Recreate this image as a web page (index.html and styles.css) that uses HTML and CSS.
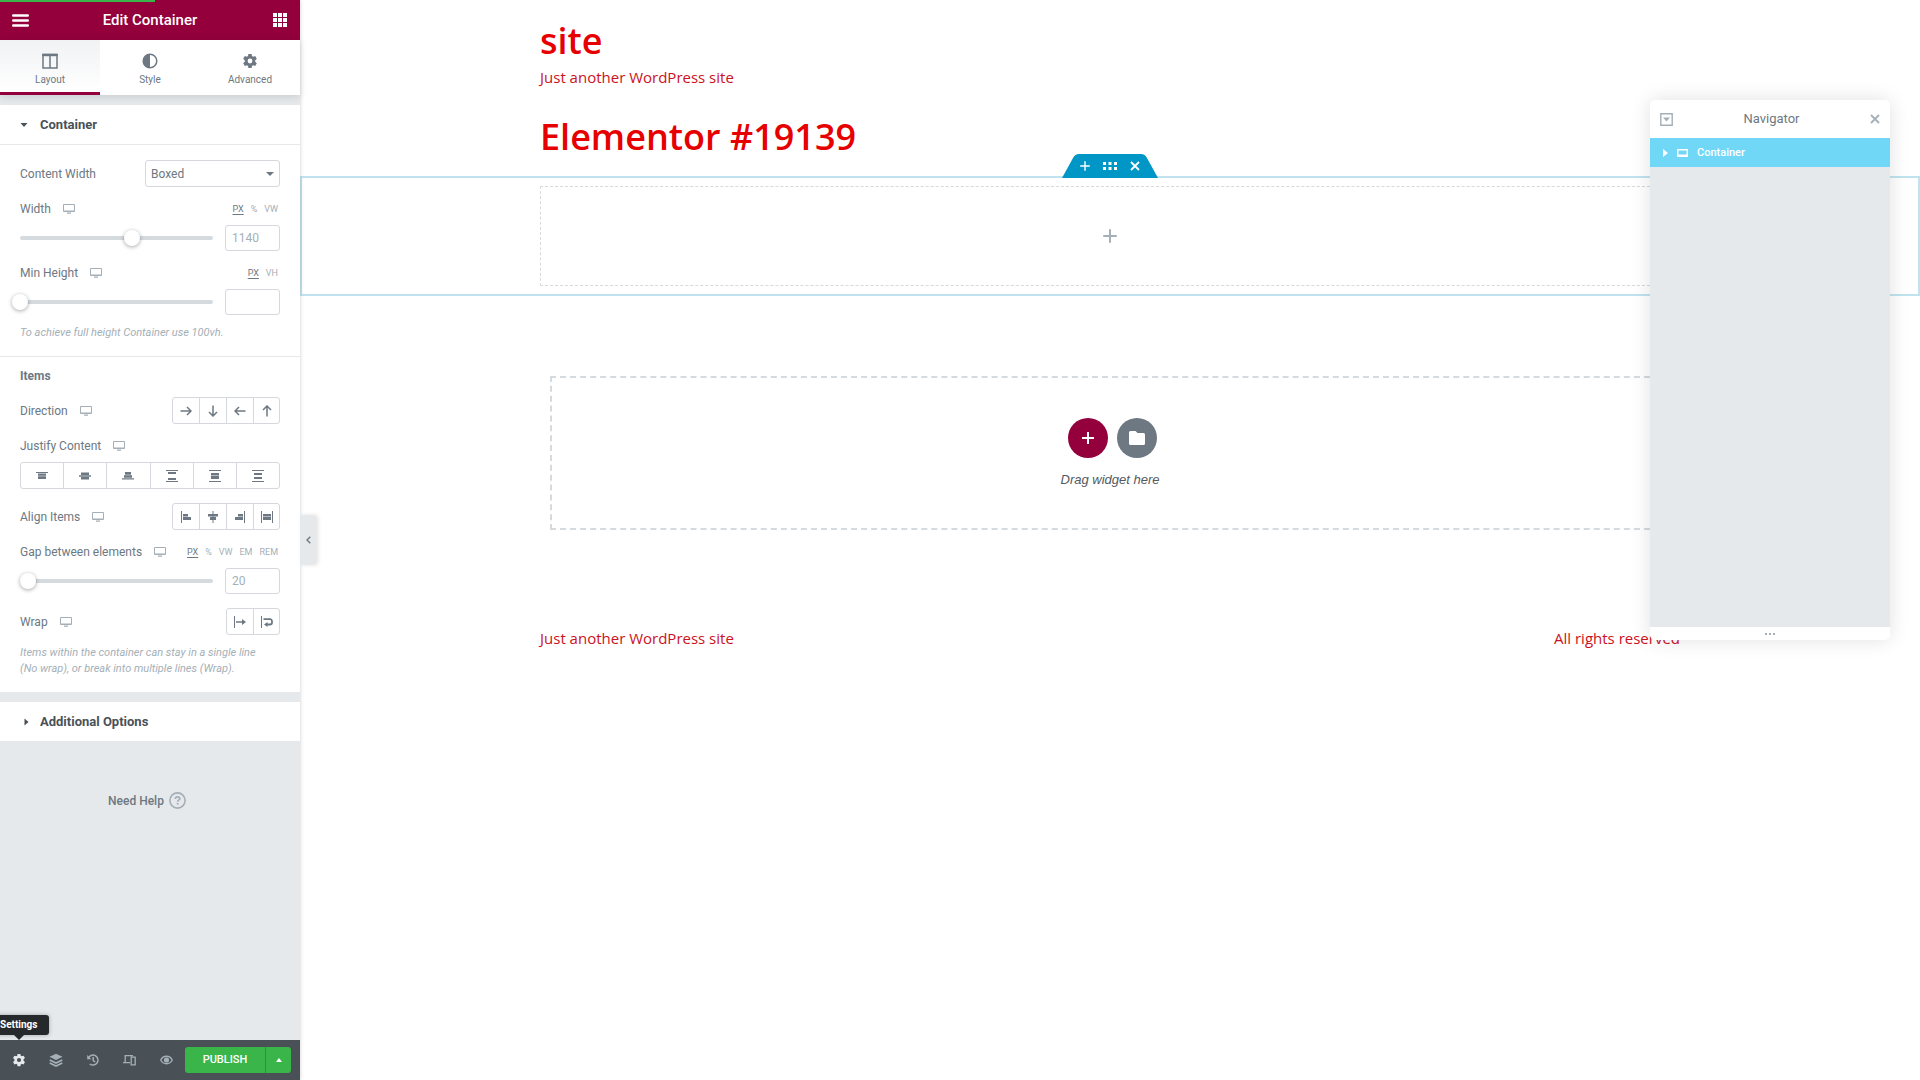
FILE: index.html
```html
<!DOCTYPE html>
<html lang="en">
<head>
<meta charset="utf-8">
<title>Elementor #19139</title>
<meta name="viewport" content="width=device-width, initial-scale=1">
<link rel="stylesheet" href="styles.css">
</head>
<body>
<svg class="sprite" aria-hidden="true">
  <symbol id="desktop" viewBox="0 0 12 10"><path fill="none" stroke="currentColor" d="M.5.5h11v7H.5z"/><path fill="currentColor" d="M1 6.5h10v1H1zM4 8.5h4v1.2H4z"/></symbol>
  <symbol id="gear" viewBox="0 0 16 16"><path fill="currentColor" fill-rule="evenodd" d="M6.4 1h3.2l.4 2 1.2.7 2-.7 1.6 2.8-1.6 1.4v1.6l1.6 1.4-1.6 2.8-2-.7-1.2.7-.4 2H6.4l-.4-2-1.2-.7-2 .7-1.6-2.8 1.6-1.4V7.200L1.200 5.800 2.800 3l2 .7L6 3zM8 5.600a2.400 2.400 0 1 0 0 4.800 2.400 2.400 0 0 0 0-4.800z"/></symbol>
  <symbol id="arrow" viewBox="0 0 12 12"><path fill="none" stroke="currentColor" stroke-width="1.500" d="M.5 6h10.500M7 2l4 4-4 4"/></symbol>
  <symbol id="plus" viewBox="0 0 14 14"><path fill="none" stroke="currentColor" stroke-width="2" stroke-linecap="round" d="M7 1v12M1 7h12"/></symbol>
  <symbol id="cross" viewBox="0 0 10 10"><path fill="none" stroke="currentColor" stroke-width="1.800" d="M1 1l8 8M9 1L1 9"/></symbol>
</svg>

<div class="editor">
  <aside class="panel">
    <div class="progress"></div>
    <header class="panel-header">
      <button type="button" aria-label="Menu"><svg width="17" height="13" viewBox="0 0 17 13"><path stroke="currentColor" stroke-width="2.400" stroke-linecap="round" d="M1.200 1.500h14.600M1.200 6.500h14.600M1.200 11.500h14.600"/></svg></button>
      <h2>Edit Container</h2>
      <button type="button" aria-label="Widgets"><svg width="14" height="14" viewBox="0 0 14 14"><path fill="currentColor" d="M0 0h4v4H0zM5 0h4v4H5zM10 0h4v4h-4zM0 5h4v4H0zM5 5h4v4H5zM10 5h4v4h-4zM0 10h4v4H0zM5 10h4v4H5zM10 10h4v4h-4z"/></svg></button>
    </header>
    <nav class="tabs">
      <button type="button" class="active"><svg width="16" height="16" viewBox="0 0 16 16"><path fill="none" stroke="currentColor" stroke-width="1.500" d="M1 1.500h14v13.500H1zM8 1.500V15"/><path fill="currentColor" d="M.3.8h15.400v2.400H.3z"/></svg>Layout</button>
      <button type="button"><svg width="16" height="16" viewBox="0 0 16 16"><circle cx="8" cy="8" r="6.800" fill="none" stroke="currentColor" stroke-width="1.500"/><path fill="currentColor" d="M8 1a7 7 0 0 0 0 14z"/></svg>Style</button>
      <button type="button"><svg width="16" height="16"><use href="#gear"/></svg>Advanced</button>
    </nav>

    <div class="sections">
      <section class="section">
        <button type="button" class="section-title"><svg width="8" height="8" viewBox="0 0 8 8"><path fill="currentColor" d="M.5 2h7L4 6z"/></svg>Container</button>
        <div class="controls">
          <div class="row tall">
            <label for="content-width">Content Width</label>
            <span class="select"><select id="content-width"><option>Boxed</option></select><svg width="8" height="4" viewBox="0 0 8 4"><path fill="currentColor" d="M0 0h8L4 4z"/></svg></span>
          </div>
          <div class="control">
            <div class="row"><label for="width">Width</label><svg class="device" width="12" height="10"><use href="#desktop"/></svg><span class="units"><u>PX</u><span>%</span><span>VW</span></span></div>
            <div class="slide"><span class="range"><input type="range" min="500" max="1600" value="1140" aria-label="Width"></span><input class="num" id="width" type="text" placeholder="1140"></div>
          </div>
          <div class="control">
            <div class="row"><label for="min-height">Min Height</label><svg class="device" width="12" height="10"><use href="#desktop"/></svg><span class="units"><u>PX</u><span>VH</span></span></div>
            <div class="slide"><span class="range"><input type="range" min="0" max="1440" value="0" aria-label="Min Height"></span><input class="num" id="min-height" type="text"></div>
            <p class="hint">To achieve full height Container use 100vh.</p>
          </div>
        </div>
        <div class="controls items">
          <h3>Items</h3>
          <div class="row tall">
            <span>Direction</span><svg class="device" width="12" height="10"><use href="#desktop"/></svg>
            <div class="choices">
              <button type="button" aria-label="Row"><svg width="12" height="12"><use href="#arrow"/></svg></button>
              <button type="button" aria-label="Column"><svg class="down" width="12" height="12"><use href="#arrow"/></svg></button>
              <button type="button" aria-label="Row reversed"><svg class="left" width="12" height="12"><use href="#arrow"/></svg></button>
              <button type="button" aria-label="Column reversed"><svg class="up" width="12" height="12"><use href="#arrow"/></svg></button>
            </div>
          </div>
          <div class="control">
            <div class="row"><span>Justify Content</span><svg class="device" width="12" height="10"><use href="#desktop"/></svg></div>
            <div class="choices wide">
              <button type="button" aria-label="Start"><svg width="12" height="12" viewBox="0 0 12 12"><path fill="currentColor" d="M0 2h12v1H0zM2 3.500h8v2.300H2zM2 6.300h8v2.700H2z"/></svg></button>
              <button type="button" aria-label="Center"><svg width="12" height="12" viewBox="0 0 12 12"><path fill="currentColor" d="M2 2.500h8v2.500H2zM0 5.300h12v1.400H0zM2 7h8v2.500H2z"/></svg></button>
              <button type="button" aria-label="End"><svg width="12" height="12" viewBox="0 0 12 12"><path fill="currentColor" d="M3 2h6v2.700H3zM2 5.200h8v2.500H2zM0 8.200h12v1.300H0z"/></svg></button>
              <button type="button" aria-label="Space between"><svg width="12" height="12" viewBox="0 0 12 12"><path fill="currentColor" d="M0 0h12v1H0zM2 2h8v2H2zM2 8h8v2H2zM0 11h12v1H0z"/></svg></button>
              <button type="button" aria-label="Space around"><svg width="12" height="12" viewBox="0 0 12 12"><path fill="currentColor" d="M0 0h12v1H0zM2 3h8v2.500H2zM2 6h8v3H2zM0 11h12v1H0z"/></svg></button>
              <button type="button" aria-label="Space evenly"><svg width="12" height="12" viewBox="0 0 12 12"><path fill="currentColor" d="M0 0h12v1H0zM2 3h8v2H2zM2 7h8v2H2zM0 11h12v1H0z"/></svg></button>
            </div>
          </div>
          <div class="row tall">
            <span>Align Items</span><svg class="device" width="12" height="10"><use href="#desktop"/></svg>
            <div class="choices">
              <button type="button" aria-label="Start"><svg width="12" height="12" viewBox="0 0 12 12"><path fill="currentColor" d="M1 0h1v12H1zM3 3h5v2.500H3zM3 6h8v3H3z"/></svg></button>
              <button type="button" aria-label="Center"><svg width="12" height="12" viewBox="0 0 12 12"><path fill="currentColor" d="M5.500 0h1v12h-1zM1 3h10v2.500H1zM3 6h6v3H3z"/></svg></button>
              <button type="button" aria-label="End"><svg width="12" height="12" viewBox="0 0 12 12"><path fill="currentColor" d="M10 0h1v12h-1zM4 3h5v2.500H4zM1 6h8v3H1z"/></svg></button>
              <button type="button" aria-label="Stretch"><svg width="12" height="12" viewBox="0 0 12 12"><path fill="currentColor" d="M0 0h1v12H0zM11 0h1v12h-1zM2 3h8v2.500H2zM2 6h8v3H2z"/></svg></button>
            </div>
          </div>
          <div class="control">
            <div class="row"><label for="gap">Gap between elements</label><svg class="device" width="12" height="10"><use href="#desktop"/></svg><span class="units"><u>PX</u><span>%</span><span>VW</span><span>EM</span><span>REM</span></span></div>
            <div class="slide"><span class="range"><input type="range" min="0" max="500" value="20" aria-label="Gap between elements"></span><input class="num" id="gap" type="text" placeholder="20"></div>
          </div>
          <div class="control">
            <div class="row tall">
              <span>Wrap</span><svg class="device" width="12" height="10"><use href="#desktop"/></svg>
              <div class="choices">
                <button type="button" aria-label="No wrap"><svg width="12" height="12" viewBox="0 0 12 12"><path fill="currentColor" d="M0 0h1v12H0zM2 5.200h6V3l4 3-4 3V6.800H2z"/></svg></button>
                <button type="button" aria-label="Wrap"><svg width="12" height="12" viewBox="0 0 12 12"><path fill="currentColor" d="M0 0h1v12H0zM3 8.500L6.500 6v5z"/><path fill="none" stroke="currentColor" stroke-width="1.800" d="M2.500 3.200H9a2 2 0 0 1 2 2v1.300a2 2 0 0 1-2 2H6"/></svg></button>
              </div>
            </div>
            <p class="hint">Items within the container can stay in a single line (No wrap), or break into multiple lines (Wrap).</p>
          </div>
        </div>
      </section>
      <section class="section">
        <button type="button" class="section-title closed"><svg width="8" height="8" viewBox="0 0 8 8"><path fill="currentColor" d="M2.500.5v7L6.500 4z"/></svg>Additional Options</button>
      </section>
      <a class="help" href="#help">Need Help <svg width="17" height="17" viewBox="0 0 17 17"><circle cx="8.500" cy="8.500" r="7.600" fill="none" stroke="currentColor" stroke-width="1.600"/><path fill="none" stroke="currentColor" stroke-width="1.600" d="M6.300 7c0-3 4.500-2.700 4.500-.3 0 1.500-2.200 1.500-2.200 3"/><circle cx="8.600" cy="11.800" r="1" fill="currentColor"/></svg></a>
    </div>

    <footer class="panel-footer">
      <button type="button" class="tool on" aria-label="Settings"><svg width="14" height="14"><use href="#gear"/></svg></button>
      <button type="button" class="tool" aria-label="Navigator"><svg width="14" height="14" viewBox="0 0 14 14"><path fill="currentColor" d="M7 .8l6.500 3L7 7 .5 3.800z"/><path fill="none" stroke="currentColor" stroke-width="1.600" d="M.7 7L7 10l6.300-3M.7 10L7 13l6.300-3"/></svg></button>
      <button type="button" class="tool" aria-label="History"><svg width="12" height="12" viewBox="0 0 12 12"><path fill="none" stroke="currentColor" stroke-width="1.500" d="M1.600 3.600A5 5 0 1 1 2.800 10M6.200 3v3.500l2 1.500"/><path fill="currentColor" d="M.2 1v4.200h4.200z"/></svg></button>
      <button type="button" class="tool" aria-label="Responsive mode"><svg width="13" height="12" viewBox="0 0 13 12"><path fill="none" stroke="currentColor" stroke-width="1.300" d="M2.200 8V1.700H10M0 8.700h7M8.200 3.200h4v7.600h-4z"/></svg></button>
      <button type="button" class="tool" aria-label="Preview"><svg width="13" height="10" viewBox="0 0 13 10"><path fill="none" stroke="currentColor" stroke-width="1.300" d="M.7 5c2.500-5 9.100-5 11.600 0-2.500 5-9.100 5-11.600 0z"/><circle cx="6.500" cy="5" r="2.600" fill="currentColor"/></svg></button>
      <button type="button" class="publish">Publish</button>
      <button type="button" class="more" aria-label="Save options"><svg width="6" height="4" viewBox="0 0 6 4"><path fill="currentColor" d="M0 4h6L3 0z"/></svg></button>
      <span class="tooltip" role="tooltip">Settings</span>
    </footer>
    <button type="button" class="collapse" aria-label="Hide panel"><svg width="5" height="8" viewBox="0 0 5 8"><path fill="none" stroke="currentColor" stroke-width="1.400" d="M4.300.8L1 4l3.300 3.200"/></svg></button>
  </aside>

  <main class="canvas">
    <header class="site content">
      <h1><a href="#home">site</a></h1>
      <p>Just another WordPress site</p>
    </header>
    <h1 class="page-title content">Elementor #19139</h1>
    <section class="container">
      <div class="handle">
        <svg class="handle-shape" width="96" height="24" viewBox="0 0 96 24"><path fill="currentColor" d="M0 24L11 4Q13 0 17 0h62q4 0 6 4l11 20z"/></svg>
        <div class="handle-buttons">
          <button type="button" aria-label="Add"><svg width="10" height="10"><use href="#plus"/></svg></button>
          <button type="button" aria-label="Edit"><svg width="14" height="8" viewBox="0 0 14 8"><path fill="currentColor" d="M0 0h3v3H0zM5.500 0h3v3h-3zM11 0h3v3h-3zM0 5h3v3H0zM5.500 5h3v3h-3zM11 5h3v3h-3z"/></svg></button>
          <button type="button" aria-label="Delete"><svg width="10" height="10"><use href="#cross"/></svg></button>
        </div>
      </div>
      <div class="empty content"><svg width="14" height="14"><use href="#plus"/></svg></div>
    </section>
    <section class="add content">
      <div class="drop">
        <div class="drop-buttons">
          <button type="button" aria-label="Add new container"><svg width="12" height="12" viewBox="0 0 12 12"><path stroke="currentColor" stroke-width="2" d="M6 0v12M0 6h12"/></svg></button>
          <button type="button" class="folder" aria-label="Add template"><svg width="16" height="14" viewBox="0 0 16 14"><path fill="currentColor" d="M1.500 0h5l2 2h6Q16 2 16 3.500v9q0 1.500-1.500 1.500h-13Q0 14 0 12.500v-11Q0 0 1.500 0z"/></svg></button>
        </div>
        <p>Drag widget here</p>
      </div>
    </section>
    <footer class="site-footer content"><p>Just another WordPress site</p><p>All rights reserved</p></footer>
  </main>

  <aside class="navigator">
    <header>
      <button type="button" aria-label="Expand all"><svg width="13" height="13" viewBox="0 0 13 13"><path fill="none" stroke="currentColor" stroke-width="1.400" d="M.8.800h11.400v11.400H.8z"/><path fill="currentColor" d="M3 4.500h7l-3.500 4z"/></svg></button>
      <h2>Navigator</h2>
      <button type="button" aria-label="Close"><svg width="10" height="10"><use href="#cross"/></svg></button>
    </header>
    <button type="button" class="node"><svg width="5" height="8" viewBox="0 0 5 8"><path fill="currentColor" d="M0 0v8l5-4z"/></svg><svg width="11" height="8" viewBox="0 0 11 8"><path fill="none" stroke="currentColor" stroke-width="1.500" d="M.7.700h9.600v6.600H.7z"/><path fill="currentColor" d="M0 5.500h11V7H0z"/></svg>Container</button>
    <div class="tree"></div>
    <div class="grip"><i></i><i></i><i></i></div>
  </aside>
</div>
</body>
</html>
```
FILE: styles.css
```css
* { box-sizing: border-box; }
body { margin: 0; background: #fff; color: #6d7882; font: 12px/14px Roboto, sans-serif; }
h1, h2, h3, p { margin: 0; }
button { margin: 0; padding: 0; border: 0; background: none; color: inherit; font: inherit; display: flex; align-items: center; justify-content: center; cursor: pointer; }
svg { display: block; flex: none; }
.sprite { position: absolute; width: 0; height: 0; }
.editor { display: flex; min-height: 100vh; position: relative; }

/* Side panel */
.panel { position: relative; z-index: 1; flex: none; width: 300px; display: flex; flex-direction: column; background: #e6e9ec; box-shadow: 0 0 4px rgba(0, 0, 0, .2); }
.progress { position: absolute; top: 0; left: 0; width: 155px; height: 2px; background: #39b54a; }
.panel-header { display: flex; align-items: center; height: 40px; padding: 0 12px; background: #93003c; color: #fff; }
.panel-header button { flex: none; width: 16px; height: 40px; }
.panel-header h2 { flex: 1; text-align: center; font-size: 15px; font-weight: 500; }
.tabs { display: flex; background: #fff; box-shadow: 0 2px 8px rgba(0, 0, 0, .12); }
.tabs button { flex: 1; height: 55px; flex-direction: column; gap: 4px; padding-top: 7px; border-bottom: 3px solid transparent; font-size: 10px; }
.tabs .active { border-bottom-color: #93003c; background: linear-gradient(#f1f2f4, #fff); }
.sections { flex: 1; display: flex; flex-direction: column; gap: 10px; padding-top: 10px; }
.section { background: #fff; }
.section-title { width: 100%; height: 40px; justify-content: flex-start; gap: 12px; padding: 0 20px; border-bottom: 1px solid #e6e9ec; color: #495157; font-size: 13px; font-weight: 700; }
.section-title.closed { height: 39px; border: 0; padding-left: 22px; gap: 10px; }
.controls { display: flex; flex-direction: column; gap: 14px; padding: 15px 20px; }
.controls.items { padding-top: 12px; border-top: 1px solid #e6e9ec; }
.controls h3 { font-size: 12px; font-weight: 700; }
.control { display: flex; flex-direction: column; gap: 8px; }
.row { display: flex; align-items: center; height: 16px; }
.row.tall { height: 27px; }
.device { margin-left: 12px; color: #a4afb7; }
.units { display: flex; gap: 7px; margin-left: auto; padding-right: 2px; color: #a4afb7; font-size: 9px; }
.units u { color: #6d7882; text-underline-offset: 2px; }
.select { display: grid; align-items: center; width: 135px; margin-left: auto; }
.select select { grid-area: 1 / 1; appearance: none; height: 27px; padding: 0 5px; border: 1px solid #d5d8dc; border-radius: 3px; background: #fff; color: inherit; font: inherit; }
.select svg { grid-area: 1 / 1; justify-self: end; margin-right: 6px; pointer-events: none; }
.slide { display: flex; align-items: center; gap: 12px; }
.range { flex: 1; display: grid; align-items: center; }
.range::before { content: ""; grid-area: 1 / 1; height: 4px; border-radius: 2px; background: #d5dadf; }
.range input { grid-area: 1 / 1; appearance: none; min-width: 0; height: 16px; margin: 0 -8px; background: none; }
.range input::-webkit-slider-thumb { appearance: none; width: 16px; height: 16px; border-radius: 50%; background: #fff; box-shadow: 0 1px 4px rgba(0, 0, 0, .35); }
.num { width: 55px; height: 26px; padding: 0 6px; border: 1px solid #d5d8dc; border-radius: 3px; color: inherit; font: inherit; }
.num::placeholder { color: #a4afb7; }
.hint { padding: 2px 12px 0 0; color: #a4afb7; font-size: 11px; font-style: italic; line-height: 16px; }
.choices { display: flex; margin-left: auto; border: 1px solid #d5d8dc; border-radius: 3px; }
.choices button { width: 27px; height: 25px; border-right: 1px solid #d5d8dc; }
.choices button:last-child { width: 25px; border-right: 0; }
.choices.wide { margin: 0; }
.choices.wide button { flex: 1; }
.down { transform: rotate(90deg); }
.left { transform: rotate(180deg); }
.up { transform: rotate(-90deg); }
.help { display: flex; align-items: center; justify-content: center; gap: 5px; margin-top: 41px; padding-right: 6px; color: #6d7882; font-weight: 500; text-decoration: none; }
.help svg { color: #a4afb7; }
.panel-footer { position: relative; display: flex; align-items: center; height: 40px; padding-right: 9px; background: #495157; color: #a4afb7; }
.tool { flex: 1; height: 40px; }
.tool.on { color: #e6e9ec; }
.publish { width: 80px; height: 26px; border-radius: 3px 0 0 3px; background: #39b54a; color: #fff; font-size: 11px; font-weight: 500; text-transform: uppercase; }
.more { width: 26px; height: 26px; border-left: 1px solid #2f8f3c; border-radius: 0 3px 3px 0; background: #39b54a; color: #fff; }
.tooltip { position: absolute; left: -12px; bottom: 45px; padding: 3px 12px; border-radius: 3px; background: #26292c; color: #fff; font-size: 10px; font-weight: 700; box-shadow: 0 0 4px rgba(0, 0, 0, .3); }
.tooltip::after { content: ""; position: absolute; top: 100%; left: 26px; border: 5px solid transparent; border-top-color: #26292c; border-bottom: 0; }
.collapse { position: absolute; left: 100%; top: 515px; width: 16px; height: 50px; border-radius: 0 3px 3px 0; background: #e6e9ec; box-shadow: 2px 0 4px rgba(0, 0, 0, .12); }

/* Page preview */
.canvas { flex: 1; min-width: 0; color: #cc1122; font: 15px/24px "Open Sans", "Noto Sans", sans-serif; }
.content { width: 100%; max-width: 1140px; margin-left: auto; margin-right: auto; }
.site { padding-top: 17px; }
.canvas h1 { color: #e60000; font-size: 36px; font-weight: 600; line-height: 48px; }
.canvas h1 a { color: inherit; text-decoration: none; }
.canvas .page-title { margin-top: 24px; padding-bottom: 15px; }
.container { position: relative; padding: 8px 0; border: 2px solid #c0e3ef; }
.handle { position: absolute; bottom: 100%; left: 50%; margin-left: -48px; display: grid; color: #0096c6; }
.handle-shape { grid-area: 1 / 1; }
.handle-buttons { grid-area: 1 / 1; display: flex; align-items: center; justify-content: center; gap: 13px; color: #fff; }
.empty { display: flex; align-items: center; justify-content: center; height: 100px; border: 1px dashed #d5dadf; color: #a4afb7; }
.add { margin-top: 80px; padding: 0 10px; }
.drop { padding: 40px 0 38px; border: 2px dashed #d5dadf; }
.drop-buttons { display: flex; justify-content: center; gap: 9px; padding-left: 5px; }
.drop button { width: 40px; height: 40px; border-radius: 50%; background: #93003c; color: #fff; }
.drop .folder { background: #6d7882; }
.drop p { margin-top: 12px; color: #54595f; font: italic 13px/20px "Liberation Sans", Arial, sans-serif; text-align: center; }
.site-footer { display: flex; justify-content: space-between; margin-top: 96px; }

/* Floating navigator */
.navigator { position: absolute; top: 100px; right: 30px; z-index: 2; width: 240px; border-radius: 5px; background: #fff; box-shadow: 0 0 20px rgba(0, 0, 0, .12); }
.navigator header { display: flex; align-items: center; height: 38px; padding: 0 10px; }
.navigator header button { color: #a4afb7; }
.navigator h2 { flex: 1; font-size: 13px; font-weight: 400; text-align: center; }
.node { width: 100%; height: 29px; justify-content: flex-start; gap: 9px; padding-left: 13px; background: #71d7f7; color: #fff; font-size: 11px; font-weight: 500; }
.tree { height: 460px; background: #e6e9ec; }
.grip { display: flex; align-items: center; justify-content: center; gap: 2px; height: 13px; }
.grip i { width: 2px; height: 2px; background: #a4afb7; }
```
